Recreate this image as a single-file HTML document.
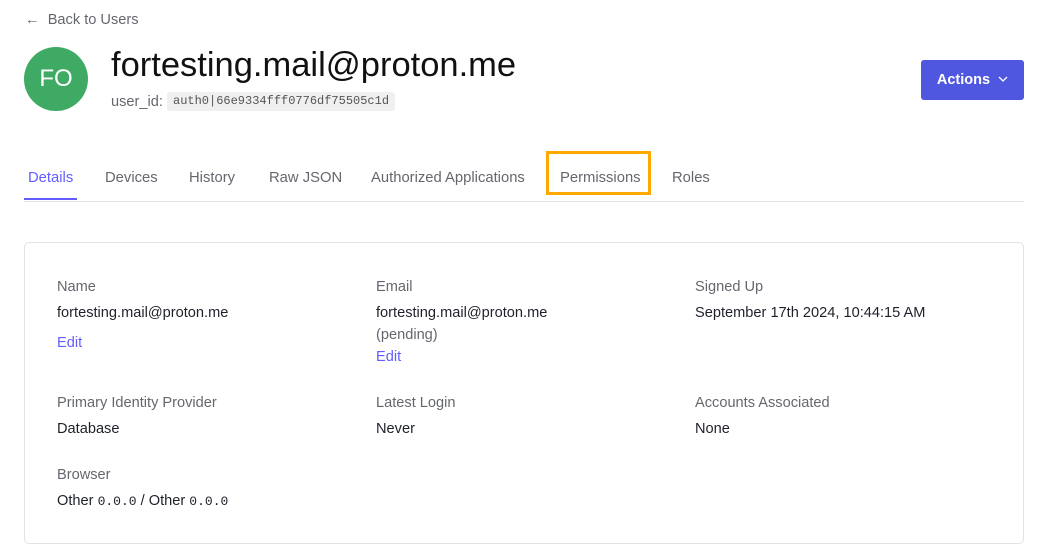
<!DOCTYPE html>
<html><head><style>
body{margin:0;width:1049px;height:558px;background:#fff;font-family:"Liberation Sans",sans-serif;position:relative;overflow:hidden;color:#1e212a}
.a{position:absolute;white-space:nowrap}
.lbl{font-size:14.6px;color:#65676e}
.val{font-size:14.6px;color:#1e212a}
.edit{font-size:14.6px;color:#635dff}
.tab{font-size:14.8px;color:#65676e;top:170px}
</style></head><body>
<div class="a" style="left:25px;top:12px;font-size:14.6px;color:#65676e">&#8592;&nbsp;&nbsp;Back to Users</div>
<div class="a" style="left:24px;top:47px;width:64px;height:64px;border-radius:50%;background:#3eaa63;color:#fff;font-size:24px;line-height:64px;text-align:center">FO</div>
<div class="a" style="left:111px;top:46px;font-size:34.5px;color:#111">fortesting.mail@proton.me</div>
<div class="a" style="left:111px;top:94px;font-size:14.6px;color:#65676e">user_id:</div>
<div class="a" style="left:167px;top:92px;height:19px;padding:0 6px;background:#f0f0f0;border-radius:3px;font-family:'Liberation Mono',monospace;font-size:12px;line-height:19px;color:#555">auth0|66e9334fff0776df75505c1d</div>
<div class="a" style="left:921px;top:60px;width:103px;height:40px;background:#4f56e0;border-radius:3px;color:#fff;font-weight:bold;font-size:14.5px;line-height:40px;text-align:center">Actions&nbsp;&nbsp;<svg width="10" height="6" viewBox="0 0 10 6" style="vertical-align:2px"><path d="M1 1l4 4 4-4" stroke="#fff" fill="none" stroke-width="1.3"/></svg></div>
<div class="a tab" style="left:28px;color:#635dff">Details</div>
<div class="a" style="left:24px;top:198px;width:53px;height:2px;background:#635dff"></div>
<div class="a tab" style="left:105px">Devices</div>
<div class="a tab" style="left:189px">History</div>
<div class="a tab" style="left:269px">Raw JSON</div>
<div class="a tab" style="left:371px">Authorized Applications</div>
<div class="a tab" style="left:560px">Permissions</div>
<div class="a tab" style="left:672px">Roles</div>
<div class="a" style="left:546px;top:151px;width:99px;height:38px;border:3px solid #ffa800"></div>
<div class="a" style="left:24px;top:201px;width:1000px;height:1px;background:#e3e3e3"></div>
<div class="a" style="left:24px;top:242px;width:998px;height:300px;border:1px solid #e3e3e3;border-radius:5px"></div>
<div class="a lbl" style="left:57px;top:279px">Name</div>
<div class="a val" style="left:57px;top:305px">fortesting.mail@proton.me</div>
<div class="a edit" style="left:57px;top:335px">Edit</div>
<div class="a lbl" style="left:376px;top:279px">Email</div>
<div class="a val" style="left:376px;top:305px">fortesting.mail@proton.me</div>
<div class="a lbl" style="left:376px;top:327px">(pending)</div>
<div class="a edit" style="left:376px;top:349px">Edit</div>
<div class="a lbl" style="left:695px;top:279px">Signed Up</div>
<div class="a val" style="left:695px;top:305px">September 17th 2024, 10:44:15 AM</div>
<div class="a lbl" style="left:57px;top:395px">Primary Identity Provider</div>
<div class="a val" style="left:57px;top:421px">Database</div>
<div class="a lbl" style="left:376px;top:395px">Latest Login</div>
<div class="a val" style="left:376px;top:421px">Never</div>
<div class="a lbl" style="left:695px;top:395px">Accounts Associated</div>
<div class="a val" style="left:695px;top:421px">None</div>
<div class="a lbl" style="left:57px;top:467px">Browser</div>
<div class="a val" style="left:57px;top:493px">Other <span style="font-family:'Liberation Mono',monospace;font-size:13px">0.0.0</span> / Other <span style="font-family:'Liberation Mono',monospace;font-size:13px">0.0.0</span></div>
</body></html>
